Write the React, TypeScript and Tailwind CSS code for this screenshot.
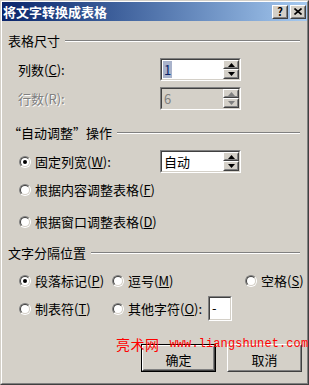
import type { ReactNode } from 'react'

const Raised = ({ className, children }: { className: string; children?: ReactNode }) => (
  <div
    className={`border border-t-white border-l-white border-r-[#404040] border-b-[#404040] bg-[#d4d0c8] ${className}`}
  >
    <div className="h-full w-full border border-t-[#d4d0c8] border-l-[#d4d0c8] border-r-[#808080] border-b-[#808080] flex items-center justify-center">
      {children}
    </div>
  </div>
)

const Sunken = ({
  className,
  bg,
  children,
}: {
  className: string
  bg: string
  children?: ReactNode
}) => (
  <div
    className={`border border-t-[#808080] border-l-[#808080] border-r-white border-b-white ${className}`}
  >
    <div
      className={`h-full w-full border border-t-[#404040] border-l-[#404040] border-r-[#d4d0c8] border-b-[#d4d0c8] flex ${bg}`}
    >
      {children}
    </div>
  </div>
)

const Arrow = ({ up, disabled }: { up?: boolean; disabled?: boolean }) => (
  <svg width="7" height="4" viewBox="0 0 7 4">
    <polygon
      points={up ? '0,4 3.5,0 7,4' : '0,0 7,0 3.5,4'}
      fill={disabled ? '#808080' : '#000'}
    />
  </svg>
)

const Spinner = ({
  value,
  disabled,
  selected,
}: {
  value: string
  disabled?: boolean
  selected?: boolean
}) => (
  <Sunken className="w-[81px] h-[23px]" bg={disabled ? 'bg-[#d4d0c8]' : 'bg-white'}>
    <div className="flex-1 flex items-center pl-[1px] leading-none">
      <span
        className={
          selected
            ? 'bg-[#a9b3cb] text-[#0a246a] px-[1px] h-[17px] flex items-center'
            : disabled
              ? 'text-[#808080] px-[1px]'
              : 'text-black px-[1px]'
        }
      >
        {value}
      </span>
    </div>
    <div className="w-[16px] flex flex-col">
      <Raised className="h-[9px]">
        <Arrow up disabled={disabled} />
      </Raised>
      <Raised className="h-[10px]">
        <Arrow disabled={disabled} />
      </Raised>
    </div>
  </Sunken>
)

const Radio = ({ checked }: { checked?: boolean }) => (
  <div className="w-[12px] h-[12px] shrink-0 rounded-full border border-t-[#808080] border-l-[#808080] border-r-white border-b-white">
    <div className="w-full h-full rounded-full border border-t-[#404040] border-l-[#404040] border-r-[#d4d0c8] border-b-[#d4d0c8] bg-white flex items-center justify-center">
      {checked && <div className="w-[4px] h-[4px] rounded-full bg-black" />}
    </div>
  </div>
)

const GroupHeading = ({ children, className }: { children: ReactNode; className: string }) => (
  <div className={`flex items-center pl-[6px] pr-[7px] h-[16px] ${className}`}>
    <span>{children}</span>
    <div className="flex-1 ml-[5px] border-t border-t-[#808080] border-b border-b-white" />
  </div>
)

const Option = ({ checked, children }: { checked?: boolean; children: ReactNode }) => (
  <div className="flex items-center gap-[4px]">
    <Radio checked={checked} />
    <span>{children}</span>
  </div>
)

export default function App() {
  return (
    <div className="w-[309px] h-[385px] relative overflow-hidden bg-[#d4d0c8] border border-t-[#d4d0c8] border-l-[#d4d0c8] border-r-[#404040] border-b-[#404040] text-[13px] leading-[16px] text-black font-['Noto_Sans_CJK_SC','Noto_Sans',sans-serif]">
      <div className="h-full border border-t-white border-l-white border-r-[#808080] border-b-[#808080] flex flex-col">
        {/* title bar */}
        <div className="h-[19px] flex items-center pl-[1px] pr-[1px] bg-gradient-to-r from-[#0a246a] to-[#a6caf0]">
          <span className="flex-1 text-white font-bold text-[13px]">将文字转换成表格</span>
          <Raised className="w-[16px] h-[14px]">
            <span className="text-[11px] font-bold leading-none">?</span>
          </Raised>
          <Raised className="w-[16px] h-[14px] ml-[2px]">
            <svg width="8" height="7" viewBox="0 0 8 7">
              <path d="M0.5 0.5 L7.5 6.5 M7.5 0.5 L0.5 6.5" stroke="#000" strokeWidth="1.6" />
            </svg>
          </Raised>
        </div>

        <GroupHeading className="mt-[12px]">表格尺寸</GroupHeading>

        <div className="mt-[9px] flex items-center pl-[16px]">
          <span className="w-[142px]">
            列数(<u>C</u>):
          </span>
          <Spinner value="1" selected />
        </div>
        <div className="mt-[6px] flex items-center pl-[16px]">
          <span className="w-[142px] text-[#808080] [text-shadow:1px_1px_0_#fff]">行数(R):</span>
          <Spinner value="6" disabled />
        </div>

        <GroupHeading className="mt-[15px]">“自动调整”操作</GroupHeading>

        <div className="mt-[9px] flex items-center pl-[17px]">
          <div className="w-[141px]">
            <Option checked>
              固定列宽(<u>W</u>):
            </Option>
          </div>
          <Spinner value="自动" />
        </div>
        <div className="mt-[9px] pl-[17px]">
          <Option>
            根据内容调整表格(<u>F</u>)
          </Option>
        </div>
        <div className="mt-[16px] pl-[17px]">
          <Option>
            根据窗口调整表格(<u>D</u>)
          </Option>
        </div>

        <GroupHeading className="mt-[15px]">文字分隔位置</GroupHeading>

        <div className="mt-[12px] flex items-center pl-[17px]">
          <div className="w-[93px]">
            <Option checked>
              段落标记(<u>P</u>)
            </Option>
          </div>
          <div className="w-[133px]">
            <Option>
              逗号(<u>M</u>)
            </Option>
          </div>
          <Option>
            空格(<u>S</u>)
          </Option>
        </div>
        <div className="mt-[7px] flex items-center pl-[17px] h-[25px]">
          <div className="w-[93px]">
            <Option>
              制表符(<u>T</u>)
            </Option>
          </div>
          <div className="w-[96px]">
            <Option>
              其他字符(<u>O</u>):
            </Option>
          </div>
          <Sunken className="w-[24px] h-[25px]" bg="bg-white">
            <span className="pl-[2px] pt-[2px]">-</span>
          </Sunken>
        </div>

        <div className="mt-[23px] flex justify-end gap-[11px] pr-[5px] leading-none">
          <div className="border border-black">
            <Raised className="w-[73px] h-[26px]">
              <span className="pt-[2px]">确定</span>
            </Raised>
          </div>
          <Raised className="w-[75px] h-[28px]">
            <span className="pt-[2px]">取消</span>
          </Raised>
        </div>
      </div>

      {/* watermark */}
      <div className="absolute left-[115px] top-[336px] w-[194px] flex items-center whitespace-nowrap text-[#ff0000] pointer-events-none leading-[14px]">
        <span className="shrink-0 text-[14px] tracking-[0.5px]">亮术网</span>
        <span className="shrink-0 ml-[10px] text-[12px] font-['Liberation_Mono',monospace] tracking-[0.1px]">
          www.liangshunet.com
        </span>
      </div>
    </div>
  )
}
